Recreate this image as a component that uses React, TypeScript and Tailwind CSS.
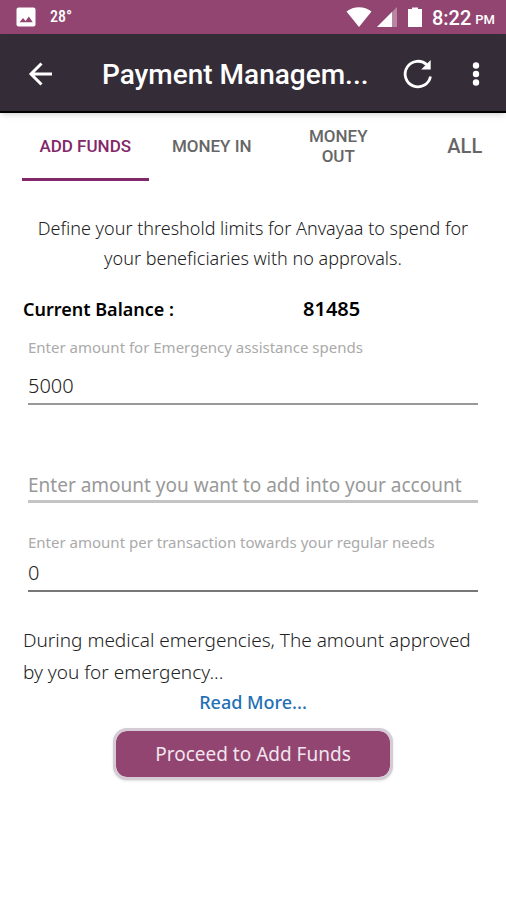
import { useState } from "react";
import clsx from "clsx";

const tabs = [
  { id: "add", label: "ADD FUNDS", className: "text-[17px] leading-5" },
  { id: "in", label: "MONEY IN", className: "text-[17px] leading-5" },
  { id: "out", label: "MONEY OUT", className: "px-6 text-[17px] leading-5" },
  { id: "all", label: "ALL", className: "text-xl" },
];

export default function App() {
  return (
    <div className="min-h-screen bg-white font-['Roboto',sans-serif]">
      <StatusBar />
      <AppBar />
      <TabBar />
      <FundsForm />
    </div>
  );
}

function StatusBar() {
  return (
    <div className="flex h-[34px] items-center bg-[#914570] pr-[11px] pl-4 text-white">
      <svg viewBox="0 0 20 20" className="h-5 w-5" aria-hidden="true">
        <rect x="0.5" y="0.5" width="19" height="19" rx="2" fill="#fff" />
        <path d="M3.5 15.2 7 10.9l2.6 3 3.2-4.3 4 5.6Z" fill="#914570" />
      </svg>
      <span className="ml-[14px] font-['Roboto_Condensed','Roboto',sans-serif] text-base font-medium">28°</span>
      <div className="ml-auto flex items-center">
        <svg viewBox="0 0 26 20" className="h-5 w-[26px]" aria-hidden="true">
          <path d="M0.5 4.6C7.5-1.2 18.5-1.2 25.5 4.6L13 20Z" fill="#fff" />
        </svg>
        <svg viewBox="0 0 20 20" className="ml-[5px] h-5 w-5" aria-hidden="true">
          <path d="M20 0V20H0Z" fill="#fff" fillOpacity="0.35" />
          <path d="M15 5V20H0Z" fill="#fff" />
        </svg>
        <svg viewBox="0 0 14 20" className="ml-[11px] h-5 w-[14px]" aria-hidden="true">
          <path d="M4 0.500h6V2h4v18H0V2h4Z" fill="#fff" />
        </svg>
        <span className="ml-[10px] pt-[2px] text-xl font-medium">8:22</span>
        <span className="ml-1 pt-[6px] text-[13px] font-medium">PM</span>
      </div>
    </div>
  );
}

function AppBar() {
  return (
    <header className="relative flex h-[79px] items-center border-b-2 border-black bg-[#342c37] pt-[2px] text-white shadow-md">
      <button type="button" aria-label="Back" className="ml-7">
        <svg viewBox="0 0 24 24" className="h-6 w-6" fill="none" stroke="currentColor" strokeWidth="3" aria-hidden="true">
          <path d="M24 12H3M13.5 1.5 3 12l10.500 10.500" />
        </svg>
      </button>
      <h1 className="ml-[50px] min-w-0 flex-1 truncate pt-[2px] text-[28px] font-medium">Payment Managem...</h1>
      <button type="button" aria-label="Refresh" className="mr-[38px]">
        <svg viewBox="0 0 32 32" className="h-8 w-8" fill="none" aria-hidden="true">
          <path d="M28.5 18.5A12.8 12.800 0 1 1 25 7" stroke="currentColor" strokeWidth="2.8" />
          <path d="M28.7 2V11.500H19.2Z" fill="currentColor" />
        </svg>
      </button>
      <button type="button" aria-label="More options" className="mr-[26px]">
        <svg viewBox="0 0 8 24" className="h-6 w-2" fill="currentColor" aria-hidden="true">
          <circle cx="4" cy="3.5" r="3.2" />
          <circle cx="4" cy="12" r="3.2" />
          <circle cx="4" cy="20.5" r="3.2" />
        </svg>
      </button>
    </header>
  );
}

function TabBar() {
  const [active, setActive] = useState("add");

  return (
    <nav className="overflow-hidden pl-[22px]">
      <div className="-mr-[22px] grid h-[68px] grid-cols-4">
        {tabs.map((tab) => (
          <button
            key={tab.id}
            type="button"
            onClick={() => setActive(tab.id)}
            className={clsx(
              "flex items-center justify-center border-b-[3px] text-center font-medium",
              tab.className,
              active === tab.id ? "border-[#82286a] text-[#82286a]" : "border-transparent text-[#666]"
            )}
          >
            {tab.label}
          </button>
        ))}
      </div>
    </nav>
  );
}

function FundsForm() {
  const [expanded, setExpanded] = useState(false);

  return (
    <form
      onSubmit={(e) => e.preventDefault()}
      className="px-[23px] pt-8 pb-10 font-['Noto_Sans',sans-serif] text-[#222]"
    >
      <p className="text-center text-lg leading-[30px] font-light">
        Define your threshold limits for Anvayaa to spend for your beneficiaries with no approvals.
      </p>

      <div className="mt-[22px] flex font-semibold text-black">
        <span className="w-[280px] text-lg leading-7">Current Balance :</span>
        <span className="text-xl leading-7">81485</span>
      </div>

      <div className="px-[5px]">
        <Field
          id="emergency"
          label="Enter amount for Emergency assistance spends"
          value="5000"
          className="mt-2 border-[#999]"
        />
        <input
          aria-label="Enter amount you want to add into your account"
          placeholder="Enter amount you want to add into your account"
          className="mt-16 mb-[15px] block h-[34px] w-full border-b-[3px] border-[#c4c4c4] text-[19px] outline-none placeholder:text-[#999]"
        />
        <Field
          id="regular"
          label="Enter amount per transaction towards your regular needs"
          value="0"
          className="border-[#777]"
        />
      </div>

      <p className="mt-8 text-[19px] leading-8 font-light">
        During medical emergencies, The amount approved by you for emergency...
      </p>
      <div className="text-center">
        <button
          type="button"
          aria-expanded={expanded}
          onClick={() => setExpanded(!expanded)}
          className="text-lg leading-7 font-medium text-[#1f70b4]"
        >
          Read More...
        </button>
      </div>
      <button
        type="submit"
        className="mx-auto mt-3 block h-[52px] w-[280px] rounded-[14px] border-[3px] border-[#d5cbd5] bg-[#914570] bg-clip-padding text-[19px] text-[#f2e4ee] shadow"
      >
        Proceed to Add Funds
      </button>
    </form>
  );
}

type FieldProps = { id: string; label: string; value: string; className?: string };

function Field({ id, label, value, className }: FieldProps) {
  return (
    <div className="pt-3">
      <label htmlFor={id} className="block text-[15px] leading-6 text-[#aaa]">
        {label}
      </label>
      <input
        id={id}
        inputMode="numeric"
        defaultValue={value}
        className={clsx("block h-[38px] w-full border-b-2 text-xl font-light outline-none", className)}
      />
    </div>
  );
}
